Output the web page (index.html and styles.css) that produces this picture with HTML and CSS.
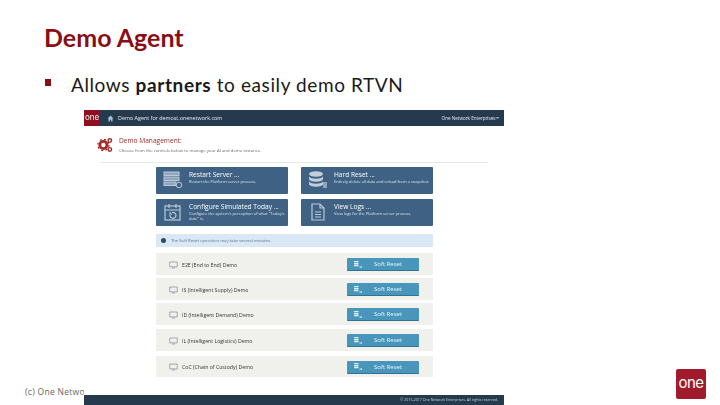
FILE: index.html
```html
<!DOCTYPE html>
<html lang="en">
<head>
<meta charset="utf-8">
<title>Demo Agent</title>
<link rel="stylesheet" href="styles.css">
</head>
<body>
<main class="slide">
  <h1 class="title">Demo Agent</h1>
  <p class="bullet"><span class="mark"></span><span>Allows <b>partners</b> to easily demo RTVN</span></p>
  <p class="copyright">(c) One Network Enterprises</p>
  <div class="slide-logo">one</div>

  <section class="app">
    <header class="bar">
      <span class="bar-logo">one</span>
      <svg class="home" viewBox="0 0 12 12"><path d="M6 1 1 6h1.5v5h2.5V8h2v3h2.500V6H11z"/></svg>
      <span class="bar-title">Demo Agent for demost.onenetwork.com</span>
      <span class="bar-right">One Network Enterprises™</span>
    </header>

    <div class="head">
      <svg class="gears" viewBox="0 0 20 20">
        <circle cx="8" cy="10" r="4.500" fill="none" stroke="#a52a2a" stroke-width="3.500"/>
        <circle cx="8" cy="10" r="7" fill="none" stroke="#a52a2a" stroke-width="1.500" stroke-dasharray="2.500 3"/>
        <circle cx="16" cy="4.500" r="2.200" fill="none" stroke="#a52a2a" stroke-width="1.800"/>
        <circle cx="16" cy="15.500" r="2.200" fill="none" stroke="#a52a2a" stroke-width="1.800"/>
      </svg>
      <div>
        <h2 class="head-title">Demo Management:</h2>
        <p class="head-sub">Choose from the controls below to manage your AI and demo instance.</p>
      </div>
    </div>

    <div class="content">
      <div class="actions">
        <div class="action">
          <svg class="action-icon" viewBox="0 0 20 20" fill="none" stroke="#b9c9d8" stroke-width="1">
            <rect x="1" y="2" width="15" height="3.500" fill="#8fa6bc"/><rect x="1" y="7" width="15" height="3.500" fill="#8fa6bc"/><rect x="1" y="12" width="12" height="3.500" fill="#8fa6bc"/>
            <circle cx="16" cy="15" r="2.800"/>
          </svg>
          <div><h3>Restart Server ...</h3><p>Restart the Platform server process.</p></div>
        </div>
        <div class="action">
          <svg class="action-icon" viewBox="0 0 20 20" fill="#c2ced9">
            <ellipse cx="8" cy="4" rx="7" ry="2.800"/><path d="M1 6.500c2 3 12 3 14 0v3c-2 3-12 3-14 0zM1 11.500c2 3 12 3 14 0v3c-2 3-12 3-14 0z"/><rect x="15" y="12" width="4" height="6" fill="#8fa6bc"/>
          </svg>
          <div><h3>Hard Reset ...</h3><p>Entirely delete all data and reload from a snapshot.</p></div>
        </div>
        <div class="action">
          <svg class="action-icon" viewBox="0 0 20 20" fill="none" stroke="#b9c9d8" stroke-width="1.200">
            <rect x="2" y="4" width="15" height="14"/><path d="M2 8h15M6 2v4M13 2v4M7 13a3 3 0 1 0 2-2.500M7 10v2h2"/>
          </svg>
          <div><h3>Configure Simulated Today ...</h3><p>Configure the system's perception of what "Today's date" is.</p></div>
        </div>
        <div class="action">
          <svg class="action-icon" viewBox="0 0 20 20" fill="none" stroke="#b9c9d8" stroke-width="1.200">
            <path d="M4 2h8l4 4v12H4zM12 2v4h4M7 10h6M7 12.500h6M7 15h6"/>
          </svg>
          <div><h3>View Logs ...</h3><p>View logs for the Platform server process.</p></div>
        </div>
      </div>

      <div class="alert"><span class="alert-dot"></span>The Soft Reset operation may take several minutes.</div>

      <div class="rows">
        <div class="row"><svg class="screen" viewBox="0 0 12 10"><path d="M1 1h10v6.500H1zM4 9h4"/></svg><span>E2E (End to End) Demo</span><button class="reset"><svg viewBox="0 0 10 8"><path d="M0 0h5v1.500H0zM0 2.200h5v1.500H0zM0 4.400h5v1.500H0z" fill="#e4f0f6"/><path d="M6 7h3l-1-1" fill="none" stroke="#e4f0f6"/></svg><span>Soft Reset</span></button></div>
        <div class="row"><svg class="screen" viewBox="0 0 12 10"><path d="M1 1h10v6.500H1zM4 9h4"/></svg><span>IS (Intelligent Supply) Demo</span><button class="reset"><svg viewBox="0 0 10 8"><path d="M0 0h5v1.500H0zM0 2.200h5v1.500H0zM0 4.400h5v1.500H0z" fill="#e4f0f6"/><path d="M6 7h3l-1-1" fill="none" stroke="#e4f0f6"/></svg><span>Soft Reset</span></button></div>
        <div class="row"><svg class="screen" viewBox="0 0 12 10"><path d="M1 1h10v6.500H1zM4 9h4"/></svg><span>ID (Intelligent Demand) Demo</span><button class="reset"><svg viewBox="0 0 10 8"><path d="M0 0h5v1.500H0zM0 2.200h5v1.500H0zM0 4.400h5v1.500H0z" fill="#e4f0f6"/><path d="M6 7h3l-1-1" fill="none" stroke="#e4f0f6"/></svg><span>Soft Reset</span></button></div>
        <div class="row row-gap1"><svg class="screen" viewBox="0 0 12 10"><path d="M1 1h10v6.500H1zM4 9h4"/></svg><span>IL (Intelligent Logistics) Demo</span><button class="reset"><svg viewBox="0 0 10 8"><path d="M0 0h5v1.500H0zM0 2.200h5v1.500H0zM0 4.400h5v1.500H0z" fill="#e4f0f6"/><path d="M6 7h3l-1-1" fill="none" stroke="#e4f0f6"/></svg><span>Soft Reset</span></button></div>
        <div class="row row-gap2"><svg class="screen" viewBox="0 0 12 10"><path d="M1 1h10v6.500H1zM4 9h4"/></svg><span>CoC (Chain of Custody) Demo</span><button class="reset"><svg viewBox="0 0 10 8"><path d="M0 0h5v1.500H0zM0 2.200h5v1.500H0zM0 4.400h5v1.500H0z" fill="#e4f0f6"/><path d="M6 7h3l-1-1" fill="none" stroke="#e4f0f6"/></svg><span>Soft Reset</span></button></div>
      </div>
    </div>

    <footer class="foot">© 2015-2017 One Network Enterprises. All rights reserved.</footer>
  </section>
</main>
</body>
</html>
```
FILE: styles.css
```css
* { box-sizing: border-box; }
html, body { margin: 0; padding: 0; background: #fff; }
body { font-family: "Open Sans", sans-serif; }
h1, h2, h3, p { margin: 0; }

.slide {
  position: relative;
  width: 720px;
  height: 405px;
  overflow: hidden;
  background: #fff;
  padding: 20px 0 0 44px;
}
.title {
  font-family: Lato, sans-serif;
  font-size: 25px;
  line-height: 34px;
  font-weight: 700;
  color: #8a0f14;
}
.bullet {
  display: flex;
  align-items: center;
  margin-top: 19px;
  font-family: Lato, sans-serif;
  font-size: 19px;
  line-height: 24px;
  letter-spacing: 0.600px;
  color: #1a1a1a;
}
.mark {
  width: 6px;
  height: 7px;
  margin: -6px 20px 0 1px;
  background: #8a0f14;
}
.copyright {
  position: absolute;
  left: 25px;
  top: 385px;
  font-family: "Open Sans", sans-serif;
  font-size: 8.500px;
  line-height: 14px;
  letter-spacing: 0.300px;
  color: #666;
  white-space: nowrap;
}
.slide-logo {
  position: absolute;
  left: 676px;
  top: 369px;
  width: 30px;
  height: 30px;
  border-radius: 2px;
  background: #a01c2c;
  color: #fff;
  font-family: Inter, sans-serif;
  font-size: 15px;
  font-weight: 400;
  line-height: 28px;
  text-align: center;
  letter-spacing: -0.500px;
}

.app {
  position: absolute;
  left: 84px;
  top: 110px;
  width: 420px;
  height: 295px;
  display: flex;
  flex-direction: column;
  background: #fff;
  filter: blur(0.450px);
}
.bar {
  flex: none;
  height: 16px;
  display: flex;
  align-items: center;
  background: #263a4e;
  color: #e6edf3;
}
.bar-logo {
  width: 16px;
  height: 16px;
  background: #8e1020;
  color: #fff;
  font-family: Inter, sans-serif;
  font-size: 8px;
  line-height: 15px;
  text-align: center;
}
.home { width: 7px; height: 7px; margin-left: 7px; fill: #9cc4dc; }
.bar-title { margin-left: 4px; font-size: 5.400px; white-space: nowrap; }
.bar-right { margin-left: auto; margin-right: 5px; font-size: 4.600px; white-space: nowrap; }

.head {
  flex: none;
  height: 37px;
  margin: 0 16px;
  display: flex;
  align-items: flex-start;
  gap: 6px;
  border-bottom: 1px solid #e8e8e8;
}
.gears { width: 16px; height: 16px; margin: 11px 0 0 -3px; flex: none; }
.head-title {
  margin-top: 10px;
  font-size: 6.600px;
  line-height: 9px;
  font-weight: 400;
  color: #9c2a2a;
  white-space: nowrap;
}
.head-sub { margin-top: 2px; font-size: 4.300px; line-height: 6px; color: #666; white-space: nowrap; }

.content { flex: 1; padding: 4px 0 0 72px; width: 349px; }
.actions {
  display: grid;
  grid-template-columns: 132px 132px;
  grid-auto-rows: 27px;
  column-gap: 13px;
  row-gap: 5px;
}
.action {
  display: flex;
  align-items: flex-start;
  padding: 3px 0 0 7px;
  border-radius: 1px;
  background: #3f6284;
  color: #fff;
}
.action-icon { width: 20px; height: 20px; flex: none; margin-right: 6px; }
.action h3 { font-size: 6.600px; line-height: 8px; font-weight: 400; white-space: nowrap; margin-top: 1px; }
.action p { font-size: 4px; line-height: 5px; color: #dbe5ee; }

.alert {
  display: flex;
  align-items: center;
  height: 13px;
  margin-top: 8px;
  padding-left: 5px;
  gap: 5px;
  border-radius: 1px;
  background: #d9e8f4;
  color: #5d7387;
  font-size: 4.200px;
  white-space: nowrap;
}
.alert-dot { width: 5px; height: 5px; border-radius: 50%; background: #2e4a63; }

.rows { display: flex; flex-direction: column; gap: 3px; margin-top: 6px; }
.row {
  flex: none;
  height: 22px;
  display: flex;
  align-items: center;
  padding: 1px 14px 0 13px;
  background: #f0f0ec;
  color: #333;
  font-size: 5.200px;
  white-space: nowrap;
}
.row-gap1 { margin-top: 1px; }
.row-gap2 { margin-top: 2px; height: 21px; }
.screen { width: 9px; height: 8px; margin-right: 4px; fill: none; stroke: #6d7b86; stroke-width: 0.800; flex: none; }
.reset {
  display: flex;
  align-items: center;
  width: 72px;
  height: 13px;
  margin-left: auto;
  padding: 0 0 0 7px;
  border: 0;
  border-bottom: 1px solid #34738f;
  border-radius: 1px;
  background: #4896bb;
  color: #eef6fa;
  font-family: "Open Sans", sans-serif;
  font-size: 6px;
}
.reset svg { width: 9px; height: 7px; flex: none; }
.reset span { margin-left: 11px; }

.foot {
  flex: none;
  height: 10px;
  margin-top: auto;
  padding-right: 6px;
  background: #263a4e;
  color: #cbd5de;
  font-size: 3.600px;
  line-height: 10px;
  text-align: right;
}
```
